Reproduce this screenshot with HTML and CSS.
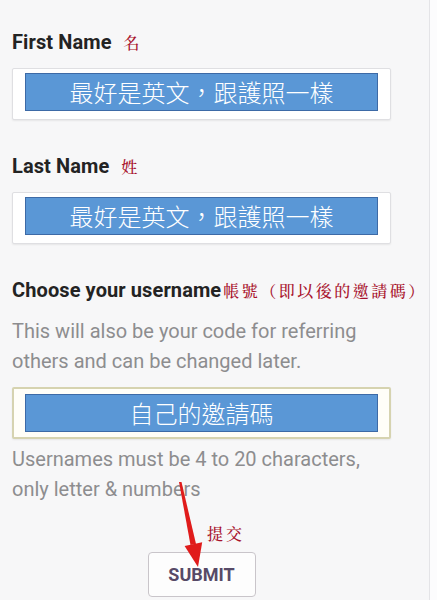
FILE: index.html
```
<!DOCTYPE html>
<html lang="zh-Hant">
<head>
<meta charset="utf-8">
<title>Sign up</title>
<link rel="stylesheet" href="styles.css">
</head>
<body>
<div class="page">
  <form class="form">
    <div class="label-row">
      <span class="label">First Name</span>
      <span class="note note-gap">名</span>
    </div>
    <div class="field">
      <div class="overlay">最好是英文，跟護照一樣</div>
    </div>

    <div class="label-row second">
      <span class="label">Last Name</span>
      <span class="note note-gap">姓</span>
    </div>
    <div class="field">
      <div class="overlay">最好是英文，跟護照一樣</div>
    </div>

    <div class="label-row second">
      <span class="label">Choose your username</span>
      <span class="note note-wide">帳號（即以後的邀請碼）</span>
    </div>
    <p class="hint hint-top">This will also be your code for referring others and can be changed later.</p>
    <div class="field field-active">
      <div class="overlay">自己的邀請碼</div>
    </div>
    <p class="hint hint-bottom">Usernames must be 4 to 20 characters, only letter &amp; numbers</p>

    <div class="submit-note"><span class="note">提交</span></div>
    <div class="actions">
      <button type="button" class="submit">SUBMIT</button>
    </div>
  </form>
  <svg class="arrow" width="437" height="600" viewBox="0 0 437 600" aria-hidden="true">
    <polygon points="179,482 181.5,482 196,544 190.5,545" fill="#e01b1b"/>
    <polygon points="198,567 184.6,546 202.2,542.2" fill="#e01b1b"/>
  </svg>
</div>
</body>
</html>
```
FILE: styles.css
```
html, body {
  margin: 0;
  padding: 0;
}
body {
  background: #fcfcfd;
  font-family: Roboto, "Noto Sans", "Liberation Sans", sans-serif;
  overflow: hidden;
}
.page {
  position: relative;
  width: 430px;
  height: 600px;
  box-sizing: border-box;
  border-right: 1px solid #e4e4e7;
  background: #f7f7f8;
}
.form {
  width: 379px;
  margin: 0 0 0 12px;
  padding-top: 30px;
}
.label-row {
  display: flex;
  align-items: baseline;
  white-space: nowrap;
  height: 24px;
  line-height: 24px;
  margin-bottom: 14px;
}
.label-row.second {
  margin-top: 34px;
}
.label {
  font-size: 20px;
  font-weight: 700;
  color: #232323;
  letter-spacing: 0.1px;
}
.note {
  font-family: "Noto Serif CJK TC", "Noto Sans CJK TC", serif;
  font-size: 16px;
  font-weight: 500;
  color: #a8122c;
}
.note-gap {
  margin-left: 12px;
}
.note-wide {
  margin-left: 2px;
  letter-spacing: 2.5px;
}
.field {
  height: 52px;
  box-sizing: border-box;
  border: 1px solid #dfdfe2;
  border-radius: 2px;
  background: #ffffff;
  box-shadow: 0 1px 2px rgba(0, 0, 0, 0.07);
  padding: 4px 12px 0;
}
.field-active {
  margin-top: 11px;
  border: 2px solid #d6d3b0;
  background: #fffef8;
  padding: 5px 11px 0;
}
.overlay {
  height: 38px;
  box-sizing: border-box;
  background: #5a97d6;
  border: 1px solid #3d6aa6;
  color: #ffffff;
  font-family: "Noto Sans CJK TC", "Noto Sans CJK SC", sans-serif;
  font-weight: 300;
  font-size: 24px;
  line-height: 36px;
  text-align: center;
}
.hint {
  margin: 0;
  font-size: 20px;
  line-height: 30px;
  color: #8d8d8f;
}
.hint-top {
  margin-top: 13px;
}
.hint-bottom {
  margin-top: 5px;
}
.submit-note {
  margin-top: 20px;
  padding-left: 195px;
  line-height: 20px;
  height: 20px;
}
.submit-note .note {
  letter-spacing: 3px;
}
.actions {
  display: flex;
  justify-content: center;
  margin-top: 8px;
}
.submit {
  width: 108px;
  height: 45px;
  border: 1px solid #c9c5ca;
  border-radius: 4px;
  background: #fdfdfd;
  color: #574a67;
  font-family: Roboto, "Liberation Sans", sans-serif;
  font-size: 18px;
  font-weight: 700;
  padding: 0;
}
.arrow {
  position: absolute;
  left: 0;
  top: 0;
  pointer-events: none;
}
```
